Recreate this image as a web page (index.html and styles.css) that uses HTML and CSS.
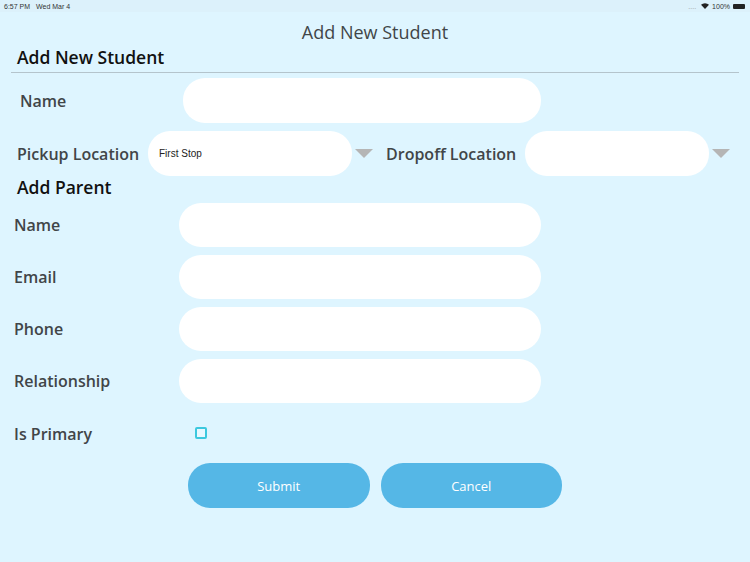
FILE: index.html
```html
<!DOCTYPE html>
<html lang="en">
<head>
    <meta charset="UTF-8">
    <meta name="viewport" content="width=device-width, initial-scale=1.0">
    <title>Add New Student</title>
    <link rel="stylesheet" href="styles.css">
</head>
<body>
    <div class="status-bar">
        <div class="status-left">
            <span>6:57 PM</span>
            <span>Wed Mar 4</span>
        </div>
        <div class="status-right">
            <span class="signal">....</span>
            <svg class="wifi" width="8" height="6" viewBox="0 0 11 8">
                <path d="M5.5 8 L0 2.4 A8 8 0 0 1 11 2.4 Z" fill="#222"/>
            </svg>
            <span>100%</span>
            <span class="battery"></span>
        </div>
    </div>

    <div class="page-title">Add New Student</div>

    <div class="section-title">Add New Student</div>

    <div class="student-name">
        <label class="field-label">Name</label>
        <div class="input"></div>
    </div>

    <div class="locations">
        <label class="field-label location-label">Pickup Location</label>
        <div class="input pickup">First Stop</div>
        <span class="arrow"></span>
        <label class="field-label location-label dropoff-label">Dropoff Location</label>
        <div class="input dropoff"></div>
        <span class="arrow"></span>
    </div>

    <div class="parent-title">Add Parent</div>

    <div class="parent-form">
        <div class="parent-row">
            <label class="field-label">Name</label>
            <div class="input"></div>
        </div>
        <div class="parent-row">
            <label class="field-label">Email</label>
            <div class="input"></div>
        </div>
        <div class="parent-row">
            <label class="field-label">Phone</label>
            <div class="input"></div>
        </div>
        <div class="parent-row">
            <label class="field-label">Relationship</label>
            <div class="input"></div>
        </div>
        <div class="primary-row">
            <label class="field-label">Is Primary</label>
            <span class="checkbox"></span>
        </div>
    </div>

    <div class="actions">
        <button class="action-button">Submit</button>
        <button class="action-button">Cancel</button>
    </div>
</body>
</html>
```

FILE: styles.css
```css
body {
    font-family: "Open Sans", sans-serif;
    margin: 0;
    padding: 0;
    height: 562px;
    overflow: hidden;
    background-color: #def5ff;
    color: #414548;
}

.status-bar {
    height: 12px;
    padding: 0 4px;
    display: flex;
    justify-content: space-between;
    align-items: center;
    background-color: #dcf1fb;
    font-family: "Liberation Sans", sans-serif;
    font-size: 7px;
    color: #333;
}

.status-left {
    display: flex;
    gap: 6px;
}

.status-right {
    display: flex;
    align-items: center;
    gap: 3px;
}

.signal {
    color: #999;
    margin-right: 2px;
}

.battery {
    width: 12px;
    height: 5px;
    background-color: #222;
    border-radius: 1px;
    margin-right: 1px;
}

.page-title {
    margin-top: 8px;
    height: 25px;
    line-height: 25px;
    text-align: center;
    font-size: 18px;
}

.section-title {
    margin: 0 11px;
    padding-left: 6px;
    height: 27px;
    line-height: 24px;
    font-size: 17.5px;
    font-weight: 600;
    color: #111;
    border-bottom: 1px solid #b4c4cc;
}

.field-label {
    font-size: 16px;
    font-weight: 600;
    color: #414548;
    line-height: 22px;
    margin-top: -1px;
}

.input {
    height: 44px;
    border-radius: 22px;
    background-color: white;
    box-sizing: border-box;
}

.student-name {
    display: flex;
    align-items: center;
    margin-top: 5px;
    padding-left: 20px;
}

.student-name .field-label {
    width: 163px;
    margin-top: 1px;
}

.student-name .input {
    width: 358px;
    height: 45px;
}

.locations {
    display: flex;
    align-items: center;
    margin-top: 8px;
    padding-left: 17px;
}

.locations .field-label {
    margin-top: 1px;
}

.locations .input {
    height: 45px;
}

.location-label {
    width: 131px;
}

.pickup {
    width: 204px;
    padding-left: 11px;
    line-height: 45px;
    font-family: "Liberation Sans", sans-serif;
    font-size: 10px;
    color: #222;
}

.dropoff-label {
    margin-left: 13px;
    width: 139px;
}

.dropoff {
    width: 184px;
}

.arrow {
    margin-left: 3px;
    border-left: 9px solid transparent;
    border-right: 9px solid transparent;
    border-top: 9px solid #b5b5b5;
}

.parent-title {
    margin-top: 0;
    padding-left: 17px;
    height: 27px;
    line-height: 23px;
    font-size: 17.5px;
    font-weight: 600;
    color: #111;
}

.parent-form {
    padding-left: 14px;
    display: flex;
    flex-direction: column;
    gap: 8px;
}

.parent-row {
    display: flex;
    align-items: center;
}

.parent-row .field-label {
    width: 165px;
}

.parent-row .input {
    width: 362px;
}

.primary-row {
    display: flex;
    align-items: center;
    height: 44px;
}

.primary-row .field-label {
    width: 181px;
    margin-top: 1px;
}

.checkbox {
    width: 12px;
    height: 12px;
    box-sizing: border-box;
    border: 2px solid #3cc8de;
    border-radius: 2px;
    background-color: #e8f8ff;
}

.actions {
    display: flex;
    gap: 11px;
    margin-top: 8px;
    padding-left: 188px;
}

.action-button {
    width: 181.5px;
    height: 45px;
    border: none;
    border-radius: 22px;
    background-color: #55b7e6;
    color: white;
    font-family: "Open Sans", sans-serif;
    font-size: 13px;
    font-weight: 500;
    cursor: pointer;
}
```
